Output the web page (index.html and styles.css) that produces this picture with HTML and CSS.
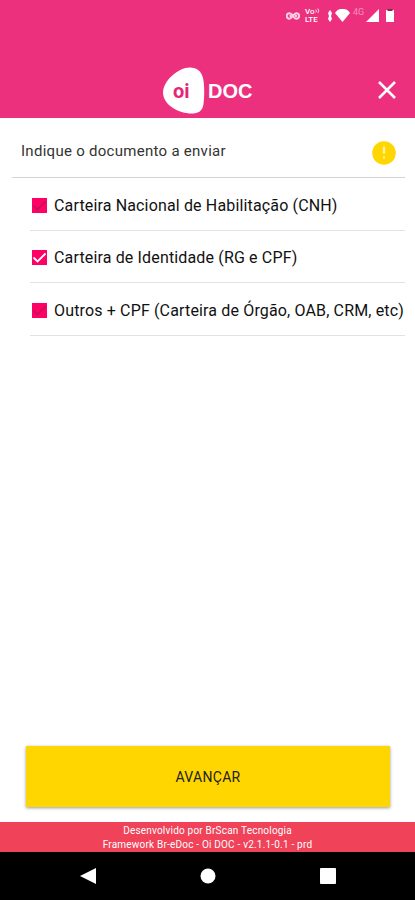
FILE: index.html
```
<!DOCTYPE html>
<html lang="pt-BR">
  <head>
    <meta charset="UTF-8" />
    <meta name="viewport" content="width=device-width, initial-scale=1.0" />
    <title>Oi DOC</title>
    <link rel="stylesheet" href="styles.css">
  </head>
  <body>
    <div class="header">
      <div class="status">
        <svg class="vpn" width="14" height="8" viewBox="0 0 14 8">
          <path d="M7 4C5.6 1.8 4.8 1.2 3.5 1.2a2.8 2.8 0 0 0 0 5.6C5.5 6.8 8 1.2 10.3 1.2a2.8 2.8 0 0 1 0 5.6C9 6.8 8.2 6 7 4z" />
          <path d="M3.5 4h2M9 4h2" />
        </svg>
        <div class="volte">
          <span>Vo<svg width="5" height="6" viewBox="0 0 5 6"><path d="M.8 1.5q1.3 1.5 0 3M2.8.5q2 2.5 0 4.5" /></svg></span>
          <span>LTE</span>
        </div>
        <svg class="bluetooth" width="4" height="12" viewBox="0 0 4 12">
          <path d="M2 0l2 3-1 3 1 3-2 3-2-3 1-3-1-3z" />
        </svg>
        <svg class="wifi" width="15" height="13" viewBox="0 0 15 13">
          <path d="M0 4C2.5.2 5 0 7.5 0S12.5.2 15 4L7.5 13z" />
        </svg>
        <span class="network">4G</span>
        <svg class="signal" width="13" height="13" viewBox="0 0 13 13">
          <path d="M13 0v13H0z" />
        </svg>
        <svg class="battery" width="8" height="13" viewBox="0 0 8 13">
          <path d="M0 1h8v12H0z" />
          <path class="level" d="M1.5 0h5v2h-5z" />
        </svg>
      </div>
      <div class="toolbar">
        <div class="logo">
          <div class="oi">
            <svg width="42" height="47" viewBox="0 0 42 47">
              <path d="M27 .5C34 .5 38 4 40 11c1.5 6 1.5 19 .5 26-1 7-5 9.5-12 9.5C16 46.5 0 38 0 25.5 0 14 15 .5 27 .5z" />
            </svg>
            <span>oi</span>
          </div>
          <span class="doc">DOC</span>
        </div>
        <svg class="close" width="18" height="18" viewBox="0 0 18 18">
          <path d="M1 1l16 16M17 1L1 17" />
        </svg>
      </div>
    </div>

    <div class="content">
      <div class="title">
        <span>Indique o documento a enviar</span>
        <svg class="alert" width="24" height="24" viewBox="0 0 24 24">
          <circle cx="12" cy="12" r="11.8" />
          <path d="M12 5.5v7M12 15.5v2" />
        </svg>
      </div>
      <ul class="list">
        <li>
          <svg class="check" width="15" height="15" viewBox="0 0 15 15"><path d="M1.5 7.5l4 4 8-8" /></svg>
          <span>Carteira Nacional de Habilitação (CNH)</span>
        </li>
        <li class="current">
          <svg class="check" width="15" height="15" viewBox="0 0 15 15"><path d="M1.5 7.5l4 4 8-8" /></svg>
          <span>Carteira de Identidade (RG e CPF)</span>
        </li>
        <li>
          <svg class="check" width="15" height="15" viewBox="0 0 15 15"><path d="M1.5 7.5l4 4 8-8" /></svg>
          <span>Outros + CPF (Carteira de Órgão, OAB, CRM, etc)</span>
        </li>
      </ul>
      <button class="next">AVANÇAR</button>
    </div>

    <div class="footer">
      <p>Desenvolvido por BrScan Tecnologia</p>
      <p>Framework Br-eDoc - Oi DOC - v2.1.1-0.1 - prd</p>
    </div>

    <div class="nav">
      <svg width="16" height="16" viewBox="0 0 16 16"><path d="M16 0v16L0 8z" /></svg>
      <svg width="16" height="16" viewBox="0 0 16 16"><circle cx="8" cy="8" r="7.5" /></svg>
      <svg width="16" height="16" viewBox="0 0 16 16"><rect width="16" height="16" rx="1" /></svg>
    </div>
  </body>
</html>
```
FILE: styles.css
```
* {
  padding: 0;
  margin: 0;
  box-sizing: border-box;
}
body {
  display: flex;
  flex-direction: column;
  height: 900px;
  background-color: #fff;
  font-family: Roboto, "Liberation Sans", sans-serif;
  overflow: hidden;
}
svg {
  display: block;
  flex: none;
}
li {
  list-style: none;
}
span,
p {
  white-space: nowrap;
}

/* header */
.header {
  display: flex;
  flex-direction: column;
  justify-content: space-between;
  height: 118px;
  background-color: #ed307e;
  color: #fff;
}
.status {
  display: flex;
  align-items: center;
  justify-content: flex-end;
  height: 31px;
  padding-right: 21px;
  fill: #fff;
}
.vpn {
  fill: none;
  stroke: #fbd0e2;
  stroke-width: 2;
  margin-right: 5px;
}
.volte {
  width: 16px;
  margin-right: 7px;
  font-size: 8px;
  font-weight: 500;
  line-height: 8px;
}
.volte span {
  display: flex;
}
.volte svg {
  fill: none;
  stroke: #fff;
  stroke-width: 0.8;
}
.bluetooth {
  margin-right: 3px;
}
.wifi {
  margin-right: 3px;
}
.network {
  width: 11px;
  margin-right: 2px;
  padding-bottom: 7px;
  font-size: 9px;
  line-height: 10px;
  color: #f590bb;
}
.signal {
  margin-right: 7px;
}
.battery .level {
  fill: #7b3050;
}
.toolbar {
  display: flex;
  align-items: center;
  justify-content: space-between;
  height: 56px;
  padding: 0 19px 0 163px;
}
.logo {
  display: flex;
  align-items: center;
  gap: 3px;
}
.oi {
  display: grid;
  fill: #fff;
}
.oi svg,
.oi span {
  grid-area: 1 / 1;
}
.oi span {
  align-self: center;
  padding: 2px 0 0 10px;
  font-size: 20px;
  font-weight: 700;
  color: #e5257a;
}
.doc {
  padding-top: 2px;
  font-family: "Liberation Sans", sans-serif;
  font-size: 20px;
  font-weight: 700;
}
.close {
  stroke: #fff;
  stroke-width: 2.5;
}

/* content */
.content {
  display: flex;
  flex: 1;
  flex-direction: column;
}
.title {
  display: flex;
  align-items: center;
  justify-content: space-between;
  height: 60px;
  margin: 0 10px 0 12px;
  padding: 11px 9px 0 9px;
  border-bottom: 1px solid #d4d4d4;
  font-size: 15px;
  letter-spacing: 0.28px;
  color: #333;
}
.title span {
  padding-bottom: 4px;
}
.alert {
  fill: #ffd600;
}
.alert path {
  stroke: #fff2a8;
  stroke-width: 2.2;
}
.list {
  margin: 0 10px 0 30px;
}
.list li {
  display: flex;
  align-items: center;
  gap: 7px;
  height: 52.5px;
  padding: 3px 0 0 2px;
  border-bottom: 1px solid #e2e2e2;
  font-size: 16px;
  letter-spacing: 0.15px;
  color: #111;
}
.check {
  background-color: #ff0066;
  fill: none;
  stroke: #b8144f;
  stroke-width: 1.4;
}
.current .check {
  stroke: #fff;
  stroke-width: 1.8;
}
.next {
  height: 61px;
  margin: auto 25px 15px 26px;
  border: none;
  background-color: #ffd600;
  box-shadow: 0 1px 3px rgba(0, 0, 0, 0.4);
  font-family: inherit;
  font-size: 14px;
  letter-spacing: 0.3px;
  color: #222;
}

/* footer */
.footer {
  height: 30px;
  padding-top: 2px;
  background-color: #f04258;
  font-size: 10px;
  line-height: 14px;
  letter-spacing: 0.2px;
  text-align: center;
  color: #fff;
}
.nav {
  display: flex;
  align-items: center;
  justify-content: center;
  gap: 104px;
  height: 48px;
  background-color: #000;
  fill: #fff;
}
```
